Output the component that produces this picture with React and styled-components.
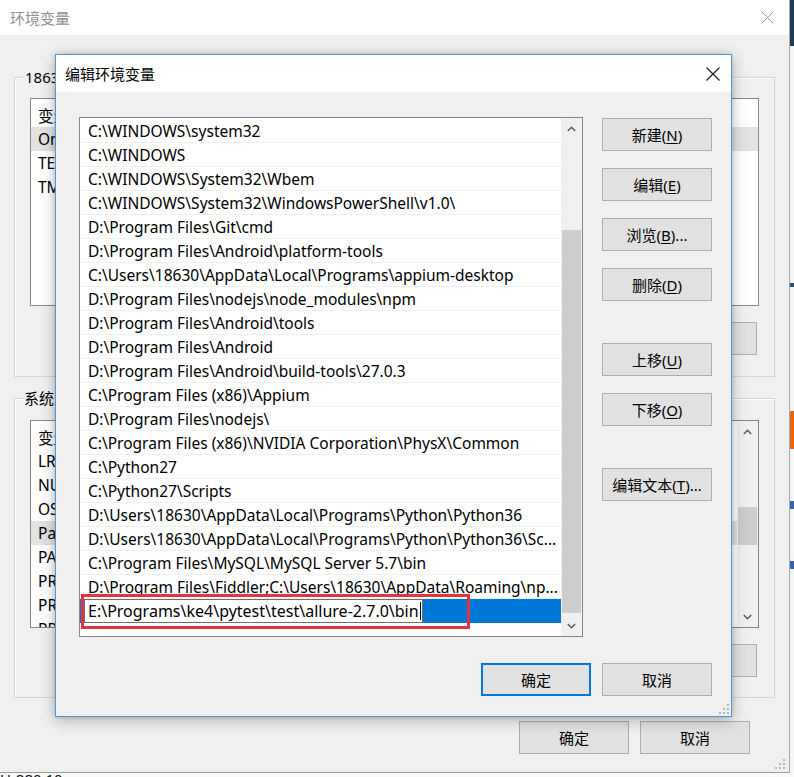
import React from "react";
import styled, { createGlobalStyle, css } from "styled-components";

const UI_FONT = `"Noto Sans", "Noto Sans CJK SC", sans-serif`;

const GlobalStyle = createGlobalStyle`
  html, body { margin: 0; padding: 0; background: #f0f0f0; }
  body { font-family: ${UI_FONT}; }
  * { box-sizing: border-box; }
`;

const Screen = styled.div`
  position: relative;
  width: 794px;
  height: 777px;
  overflow: hidden;
  display: flex;
  flex-direction: column;
  background: #f0f0f0;
  font-family: ${UI_FONT};
  font-size: 15px;
  color: #000;
`;

const TopArea = styled.div`
  display: flex;
  height: 773px;
  flex: none;
`;

const OuterWindow = styled.div`
  position: relative;
  width: 790px;
  height: 773px;
  flex: none;
  display: flex;
  flex-direction: column;
  background: #f0f0f0;
  border-right: 1px solid #a8a8a8;
  border-bottom: 1px solid #9c9c9c;
`;

const TitleBar = styled.div`
  height: ${(p) => p.$h}px;
  flex: none;
  display: flex;
  align-items: center;
  justify-content: space-between;
  background: #fff;
  padding: 0 ${(p) => p.$pr}px 0 ${(p) => p.$pl}px;
  color: ${(p) => (p.$inactive ? "#8f8f8f" : "#000")};
  font-size: 15px;
  line-height: 20px;
`;

const CloseIcon = styled.svg`
  display: block;
  flex: none;
`;

const OuterBody = styled.div`
  flex: 1;
  display: flex;
  flex-direction: column;
  padding: 42px 14px 0 14px;
`;

const GroupBox = styled.div`
  position: relative;
  height: 300px;
  flex: none;
  margin-top: ${(p) => p.$mt || 0}px;
  border: 1px solid #d6d6d6;
  box-shadow: inset 1px 1px 0 #fff;
  padding: ${(p) => p.$pt}px 15px 0 15px;
  display: flex;
  flex-direction: column;
`;

const GroupLabel = styled.span`
  position: absolute;
  top: -11px;
  left: ${(p) => p.$left}px;
  padding: 0 1px;
  background: #f0f0f0;
  line-height: 20px;
  font-size: 15px;
  white-space: nowrap;
`;

const VarList = styled.div`
  height: 208px;
  flex: none;
  display: flex;
  background: #fff;
  border: 1px solid #828790;
  overflow: hidden;
`;

const VarRows = styled.div`
  flex: 1;
  padding-top: 4px;
  display: flex;
  flex-direction: column;
  overflow: hidden;
`;

const VarRow = styled.div`
  height: 24px;
  flex: none;
  display: flex;
  align-items: center;
  padding-left: 7px;
  white-space: nowrap;
  font-size: 15.5px;
  background: ${(p) => (p.$selected ? "#e2e2e2" : "transparent")};
  span {
    width: 190px;
  }
`;

const GroupButtons = styled.div`
  display: flex;
  justify-content: flex-end;
  gap: 11px;
  margin-top: 16px;
  padding-right: 2px;
`;

const Button = styled.button`
  width: 110px;
  height: 33px;
  flex: none;
  padding: 0;
  display: flex;
  align-items: center;
  justify-content: center;
  background: #e1e1e1;
  border: 1px solid #adadad;
  font-family: ${UI_FONT};
  font-size: 15px;
  line-height: 20px;
  color: #000;
  white-space: nowrap;
  u {
    text-decoration: underline;
    text-underline-offset: 2px;
  }
  ${(p) =>
    p.$default &&
    css`
      border: 2px solid #0078d7;
    `}
`;

const BottomButtons = styled.div`
  display: flex;
  justify-content: flex-end;
  gap: ${(p) => p.$gap}px;
  margin-top: ${(p) => p.$mt}px;
  padding-right: ${(p) => p.$pr}px;
`;

const ScrollBar = styled.div`
  width: ${(p) => p.$w}px;
  flex: none;
  display: flex;
  flex-direction: column;
  background: #f0f0f0;
`;

const ScrollArrow = styled.div`
  height: ${(p) => p.$h}px;
  flex: none;
  display: flex;
  align-items: center;
  justify-content: center;
`;

const ScrollTrack = styled.div`
  flex: 1;
  display: flex;
  flex-direction: column;
`;

const ScrollThumb = styled.div`
  flex: none;
  margin: 0 1px;
  background: #cdcdcd;
`;

const Grip = styled.svg`
  position: absolute;
  right: ${(p) => p.$r}px;
  bottom: ${(p) => p.$b}px;
  display: block;
`;

const DesktopStrip = styled.div`
  width: 4px;
  flex: none;
  display: flex;
  flex-direction: column;
  background: #f5f5f5;
`;

const StripBlock = styled.div`
  height: ${(p) => p.$h}px;
  flex: none;
  background: ${(p) => p.$c};
`;

const TaskStrip = styled.div`
  height: 4px;
  flex: none;
  overflow: hidden;
  background: #fafafa;
  font-size: 15px;
  line-height: 15px;
  color: #111;
  white-space: nowrap;
  span {
    display: block;
    margin-top: -1px;
  }
`;

/* ---------- edit dialog ---------- */

const EditWindow = styled.div`
  position: absolute;
  left: 55px;
  top: 54px;
  width: 677px;
  height: 663px;
  display: flex;
  flex-direction: column;
  background: #f0f0f0;
  border: 1px solid #4f96d6;
  box-shadow: 0 3px 14px rgba(0, 0, 0, 0.28), 0 0 4px rgba(0, 0, 0, 0.12);
`;

const EditBody = styled.div`
  position: relative;
  flex: 1;
  display: flex;
  flex-direction: column;
  padding: 25px 19px 19px 23px;
`;

const MainRow = styled.div`
  display: flex;
  gap: 19px;
  align-items: flex-start;
`;

const PathList = styled.div`
  width: 504px;
  height: 520px;
  flex: none;
  display: flex;
  background: #fff;
  border: 1px solid #828790;
`;

const PathRows = styled.div`
  flex: 1;
  min-width: 0;
  padding-top: 1px;
  display: flex;
  flex-direction: column;
`;

const PathRow = styled.div`
  height: 24px;
  flex: none;
  display: flex;
  align-items: center;
  padding: 0 1px 0 ${(p) => (p.$editing ? 4 : 8)}px;
  border-bottom: 1px solid ${(p) => (p.$editing ? "#0078d7" : "#f0f0f0")};
  background: ${(p) => (p.$editing ? "#0078d7" : "transparent")};
  font-size: 15.5px;
  min-width: 0;
`;

const PathText = styled.span`
  display: block;
  min-width: 0;
  white-space: nowrap;
  overflow: hidden;
`;

const EditBox = styled.div`
  width: 339px;
  height: 24px;
  flex: none;
  display: flex;
  align-items: center;
  padding-left: 3px;
  background: #fff;
  border: 1px solid #6e6e6e;
  white-space: nowrap;
  font-size: 16px;
`;

const Caret = styled.span`
  display: inline-block;
  width: 1px;
  height: 18px;
  margin-left: 1px;
  background: #000;
`;

const ButtonColumn = styled.div`
  display: flex;
  flex-direction: column;
  gap: 42px;
  margin-top: 1px;
`;

const ButtonGroup = styled.div`
  display: flex;
  flex-direction: column;
  gap: 17px;
`;

const Highlight = styled.div`
  position: absolute;
  left: 81px;
  top: 594px;
  width: 389px;
  height: 35px;
  border: 3px solid #e2343f;
  pointer-events: none;
`;

function Chevron({ up }) {
  return (
    <svg width="9" height="6" viewBox="0 0 9 6">
      <path
        d={up ? "M0.8 5 L4.5 1.3 L8.2 5" : "M0.8 1 L4.5 4.7 L8.2 1"}
        fill="none"
        stroke="#5a5a5a"
        strokeWidth="1.5"
      />
    </svg>
  );
}

function Scroll({ w, arrowH, thumbTop, thumbH }) {
  return (
    <ScrollBar $w={w}>
      <ScrollArrow $h={arrowH}>
        <Chevron up />
      </ScrollArrow>
      <ScrollTrack>
        <ScrollThumb style={{ marginTop: thumbTop, height: thumbH }} />
      </ScrollTrack>
      <ScrollArrow $h={arrowH}>
        <Chevron />
      </ScrollArrow>
    </ScrollBar>
  );
}

function GripDots() {
  const dots = [
    [8, 0],
    [4, 4],
    [8, 4],
    [0, 8],
    [4, 8],
    [8, 8],
  ];
  return dots.map(([x, y]) => (
    <rect key={`${x}-${y}`} x={x} y={y} width="2" height="2" fill="#b8b8b8" />
  ));
}

const paths = [
  "C:\\WINDOWS\\system32",
  "C:\\WINDOWS",
  "C:\\WINDOWS\\System32\\Wbem",
  "C:\\WINDOWS\\System32\\WindowsPowerShell\\v1.0\\",
  "D:\\Program Files\\Git\\cmd",
  "D:\\Program Files\\Android\\platform-tools",
  "C:\\Users\\18630\\AppData\\Local\\Programs\\appium-desktop",
  "D:\\Program Files\\nodejs\\node_modules\\npm",
  "D:\\Program Files\\Android\\tools",
  "D:\\Program Files\\Android",
  "D:\\Program Files\\Android\\build-tools\\27.0.3",
  "C:\\Program Files (x86)\\Appium",
  "D:\\Program Files\\nodejs\\",
  "C:\\Program Files (x86)\\NVIDIA Corporation\\PhysX\\Common",
  "C:\\Python27",
  "C:\\Python27\\Scripts",
  "D:\\Users\\18630\\AppData\\Local\\Programs\\Python\\Python36",
  "D:\\Users\\18630\\AppData\\Local\\Programs\\Python\\Python36\\Sc...",
  "C:\\Program Files\\MySQL\\MySQL Server 5.7\\bin",
  "D:\\Program Files\\Fiddler;C:\\Users\\18630\\AppData\\Roaming\\np...",
];

const editingPath = "E:\\Programs\\ke4\\pytest\\test\\allure-2.7.0\\bin";

const userVars = [
  ["变量", "值", false],
  ["OneDrive", "C:\\Users\\18630\\OneDrive", true],
  ["TEMP", "%USERPROFILE%\\AppData\\Local\\Temp", false],
  ["TMP", "%USERPROFILE%\\AppData\\Local\\Temp", false],
];

const sysVars = [
  ["变量", "值", false],
  ["LR_PATH", "", false],
  ["NUMBER_OF_PROCESSORS", "4", false],
  ["OS", "Windows_NT", false],
  ["Path", "", true],
  ["PATHEXT", "", false],
  ["PROCESSOR_ARCHITECTURE", "AMD64", false],
  ["PROCESSOR_IDENTIFIER", "", false],
  ["PROCESSOR_LEVEL", "6", false],
];

function X({ size, color, width }) {
  return (
    <CloseIcon width={size} height={size} viewBox={`0 0 ${size} ${size}`}>
      <path
        d={`M0.5 0.5 L${size - 0.5} ${size - 0.5} M${size - 0.5} 0.5 L0.5 ${size - 0.5}`}
        stroke={color}
        strokeWidth={width}
        fill="none"
      />
    </CloseIcon>
  );
}

export default function App() {
  return (
    <>
      <GlobalStyle />
      <Screen>
        <TopArea>
          <OuterWindow>
            <TitleBar $h={35} $pl={10} $pr={15} $inactive>
              <span>环境变量</span>
              <X size={13} color="#9a9a9a" width={1} />
            </TitleBar>
            <OuterBody>
              <GroupBox $pt={20}>
                <GroupLabel $left={9}>18630 的用户变量(U)</GroupLabel>
                <VarList>
                  <VarRows>
                    {userVars.map(([n, v, s]) => (
                      <VarRow key={n} $selected={s}>
                        <span>{n}</span>
                        {v}
                      </VarRow>
                    ))}
                  </VarRows>
                </VarList>
                <GroupButtons>
                  <Button>新建(N)...</Button>
                  <Button>编辑(E)...</Button>
                  <Button>删除(D)</Button>
                </GroupButtons>
              </GroupBox>
              <GroupBox $mt={21} $pt={21}>
                <GroupLabel $left={8}>系统变量(S)</GroupLabel>
                <VarList>
                  <VarRows>
                    {sysVars.map(([n, v, s]) => (
                      <VarRow key={n} $selected={s}>
                        <span>{n}</span>
                        {v}
                      </VarRow>
                    ))}
                  </VarRows>
                  <Scroll w={21} arrowH={21} thumbTop={65} thumbH={38} />
                </VarList>
                <GroupButtons>
                  <Button>新建(W)...</Button>
                  <Button>编辑(I)...</Button>
                  <Button>删除(L)</Button>
                </GroupButtons>
              </GroupBox>
              <BottomButtons $gap={11} $mt={23} $pr={25}>
                <Button>确定</Button>
                <Button>取消</Button>
              </BottomButtons>
            </OuterBody>
            <Grip $r={4} $b={3} width="10" height="10" viewBox="0 0 10 10">
              <GripDots />
            </Grip>
          </OuterWindow>
          <DesktopStrip>
            <StripBlock $h={46} $c="#1f3c55" />
            <StripBlock $h={237} $c="#f4f4f4" />
            <StripBlock $h={4} $c="#2a4f86" />
            <StripBlock $h={124} $c="#f4f4f4" />
            <StripBlock $h={38} $c="#e4680f" />
            <StripBlock $h={52} $c="#f6f6f6" />
            <StripBlock $h={8} $c="#3a62b0" />
            <StripBlock $h={52} $c="#f6f6f6" />
            <StripBlock $h={8} $c="#3a62b0" />
          </DesktopStrip>
        </TopArea>
        <TaskStrip>
          <span>U-880 10</span>
        </TaskStrip>

        <EditWindow>
          <TitleBar $h={37} $pl={9} $pr={11}>
            <span>编辑环境变量</span>
            <X size={14} color="#1a1a1a" width={1.1} />
          </TitleBar>
          <EditBody>
            <MainRow>
              <PathList>
                <PathRows>
                  {paths.map((p) => (
                    <PathRow key={p}>
                      <PathText>{p}</PathText>
                    </PathRow>
                  ))}
                  <PathRow $editing>
                    <EditBox>
                      {editingPath}
                      <Caret />
                    </EditBox>
                  </PathRow>
                </PathRows>
                <Scroll w={21} arrowH={21} thumbTop={91} thumbH={383} />
              </PathList>
              <ButtonColumn>
                <ButtonGroup>
                  <Button>
                    新建(<u>N</u>)
                  </Button>
                  <Button>
                    编辑(<u>E</u>)
                  </Button>
                  <Button>
                    浏览(<u>B</u>)...
                  </Button>
                  <Button>
                    删除(<u>D</u>)
                  </Button>
                </ButtonGroup>
                <ButtonGroup>
                  <Button>
                    上移(<u>U</u>)
                  </Button>
                  <Button>
                    下移(<u>O</u>)
                  </Button>
                </ButtonGroup>
                <ButtonGroup>
                  <Button>
                    编辑文本(<u>T</u>)...
                  </Button>
                </ButtonGroup>
              </ButtonColumn>
            </MainRow>
            <BottomButtons $gap={11} $mt={26} $pr={0}>
              <Button $default>确定</Button>
              <Button>取消</Button>
            </BottomButtons>
            <Grip $r={2} $b={2} width="10" height="10" viewBox="0 0 10 10">
              <GripDots />
            </Grip>
          </EditBody>
        </EditWindow>
        <Highlight />
      </Screen>
    </>
  );
}
